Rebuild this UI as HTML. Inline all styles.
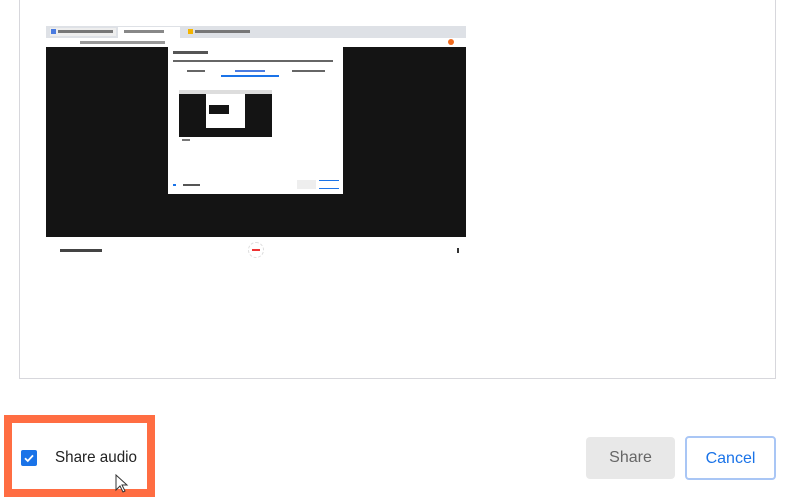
<!DOCTYPE html>
<html><head><style>
body{margin:0;width:792px;height:498px;background:#fff;position:relative;overflow:hidden;font-family:"Liberation Sans",sans-serif}
.a{position:absolute}
</style></head><body>
<div class="a" style="left:19px;top:-2px;width:755px;height:380px;border:1px solid #d7d7dc;border-top:none"></div>
<div class="a" style="left:46px;top:26px;width:420px;height:12px;background:#dee1e6"></div>
<div class="a" style="left:50px;top:28px;width:66px;height:8px;background:#eee"></div>
<div class="a" style="left:51px;top:29px;width:5px;height:5px;background:#4a7be0"></div>
<div class="a" style="left:58px;top:30px;width:55px;height:3px;background:#777"></div>
<div class="a" style="left:118px;top:27px;width:62px;height:11px;background:#fff"></div>
<div class="a" style="left:124px;top:30px;width:40px;height:3px;background:#888"></div>
<div class="a" style="left:188px;top:29px;width:5px;height:5px;background:#f4b400"></div>
<div class="a" style="left:195px;top:30px;width:55px;height:3px;background:#777"></div>
<div class="a" style="left:46px;top:38px;width:420px;height:9px;background:#fff"></div>
<div class="a" style="left:80px;top:41px;width:85px;height:3px;background:#999"></div>
<div class="a" style="left:448px;top:39px;width:6px;height:6px;border-radius:50%;background:#f06a1d"></div>
<div class="a" style="left:46px;top:47px;width:420px;height:190px;background:#141414"></div>
<div class="a" style="left:168px;top:45px;width:175px;height:149px;background:#fff"></div>
<div class="a" style="left:173px;top:51px;width:35px;height:3px;background:#555"></div>
<div class="a" style="left:173px;top:60px;width:160px;height:2px;background:#666"></div>
<div class="a" style="left:187px;top:70px;width:18px;height:2px;background:#666"></div>
<div class="a" style="left:235px;top:70px;width:30px;height:2px;background:#4a7be0"></div>
<div class="a" style="left:221px;top:75px;width:58px;height:2px;background:#1a73e8"></div>
<div class="a" style="left:292px;top:70px;width:33px;height:2px;background:#666"></div>
<div class="a" style="left:179px;top:91px;width:93px;height:46px;background:#141414"></div>
<div class="a" style="left:179px;top:90px;width:93px;height:4px;background:#ddd"></div>
<div class="a" style="left:206px;top:94px;width:39px;height:34px;background:#fff"></div>
<div class="a" style="left:209px;top:105px;width:20px;height:9px;background:#141414"></div>
<div class="a" style="left:182px;top:139px;width:8px;height:2px;background:#777"></div>
<div class="a" style="left:173px;top:184px;width:3px;height:2px;background:#1a73e8"></div>
<div class="a" style="left:183px;top:184px;width:17px;height:2px;background:#555"></div>
<div class="a" style="left:297px;top:180px;width:19px;height:9px;background:#eee"></div>
<div class="a" style="left:319px;top:180px;width:20px;height:9px;border-top:1px solid #1a73e8;border-bottom:1px solid #1a73e8;box-sizing:border-box"></div>
<div class="a" style="left:60px;top:249px;width:42px;height:3px;background:#444"></div>
<div class="a" style="left:248px;top:242px;width:16px;height:16px;border-radius:50%;border:1px dashed #ddd;box-sizing:border-box"></div>
<div class="a" style="left:252px;top:249px;width:8px;height:2px;background:#e33"></div>
<div class="a" style="left:457px;top:248px;width:2px;height:5px;background:#333"></div>
<div class="a" style="left:4px;top:415px;width:151px;height:82px;border:8px solid #ff6d42;box-sizing:border-box"></div>
<div class="a" style="left:21px;top:450px;width:16px;height:16px;background:#1a73e8;border-radius:2px"></div>
<svg class="a" style="left:21px;top:450px" width="16" height="16"><path d="M4 8.2l2.8 2.8L12 5.4" fill="none" stroke="#fff" stroke-width="1.8"/></svg>
<div class="a" style="left:55px;top:449px;font-size:16px;color:#222;transform:scaleX(0.95);transform-origin:left">Share audio</div>
<svg class="a" style="left:115px;top:474px" width="14" height="20"><path d="M1 1v15l4-4 3 6 2-1-3-6h5z" fill="#fff" stroke="#333" stroke-width="1"/></svg>
<div class="a" style="left:586px;top:437px;width:89px;height:42px;background:#e8e8e8;border-radius:4px;color:#666;font-size:16px;line-height:42px;text-align:center">Share</div>
<div class="a" style="left:685px;top:436px;width:91px;height:44px;border:2px solid #a9c6f5;border-radius:4px;box-sizing:border-box;color:#1a73e8;font-size:16px;line-height:42px;text-align:center">Cancel</div>
</body></html>
